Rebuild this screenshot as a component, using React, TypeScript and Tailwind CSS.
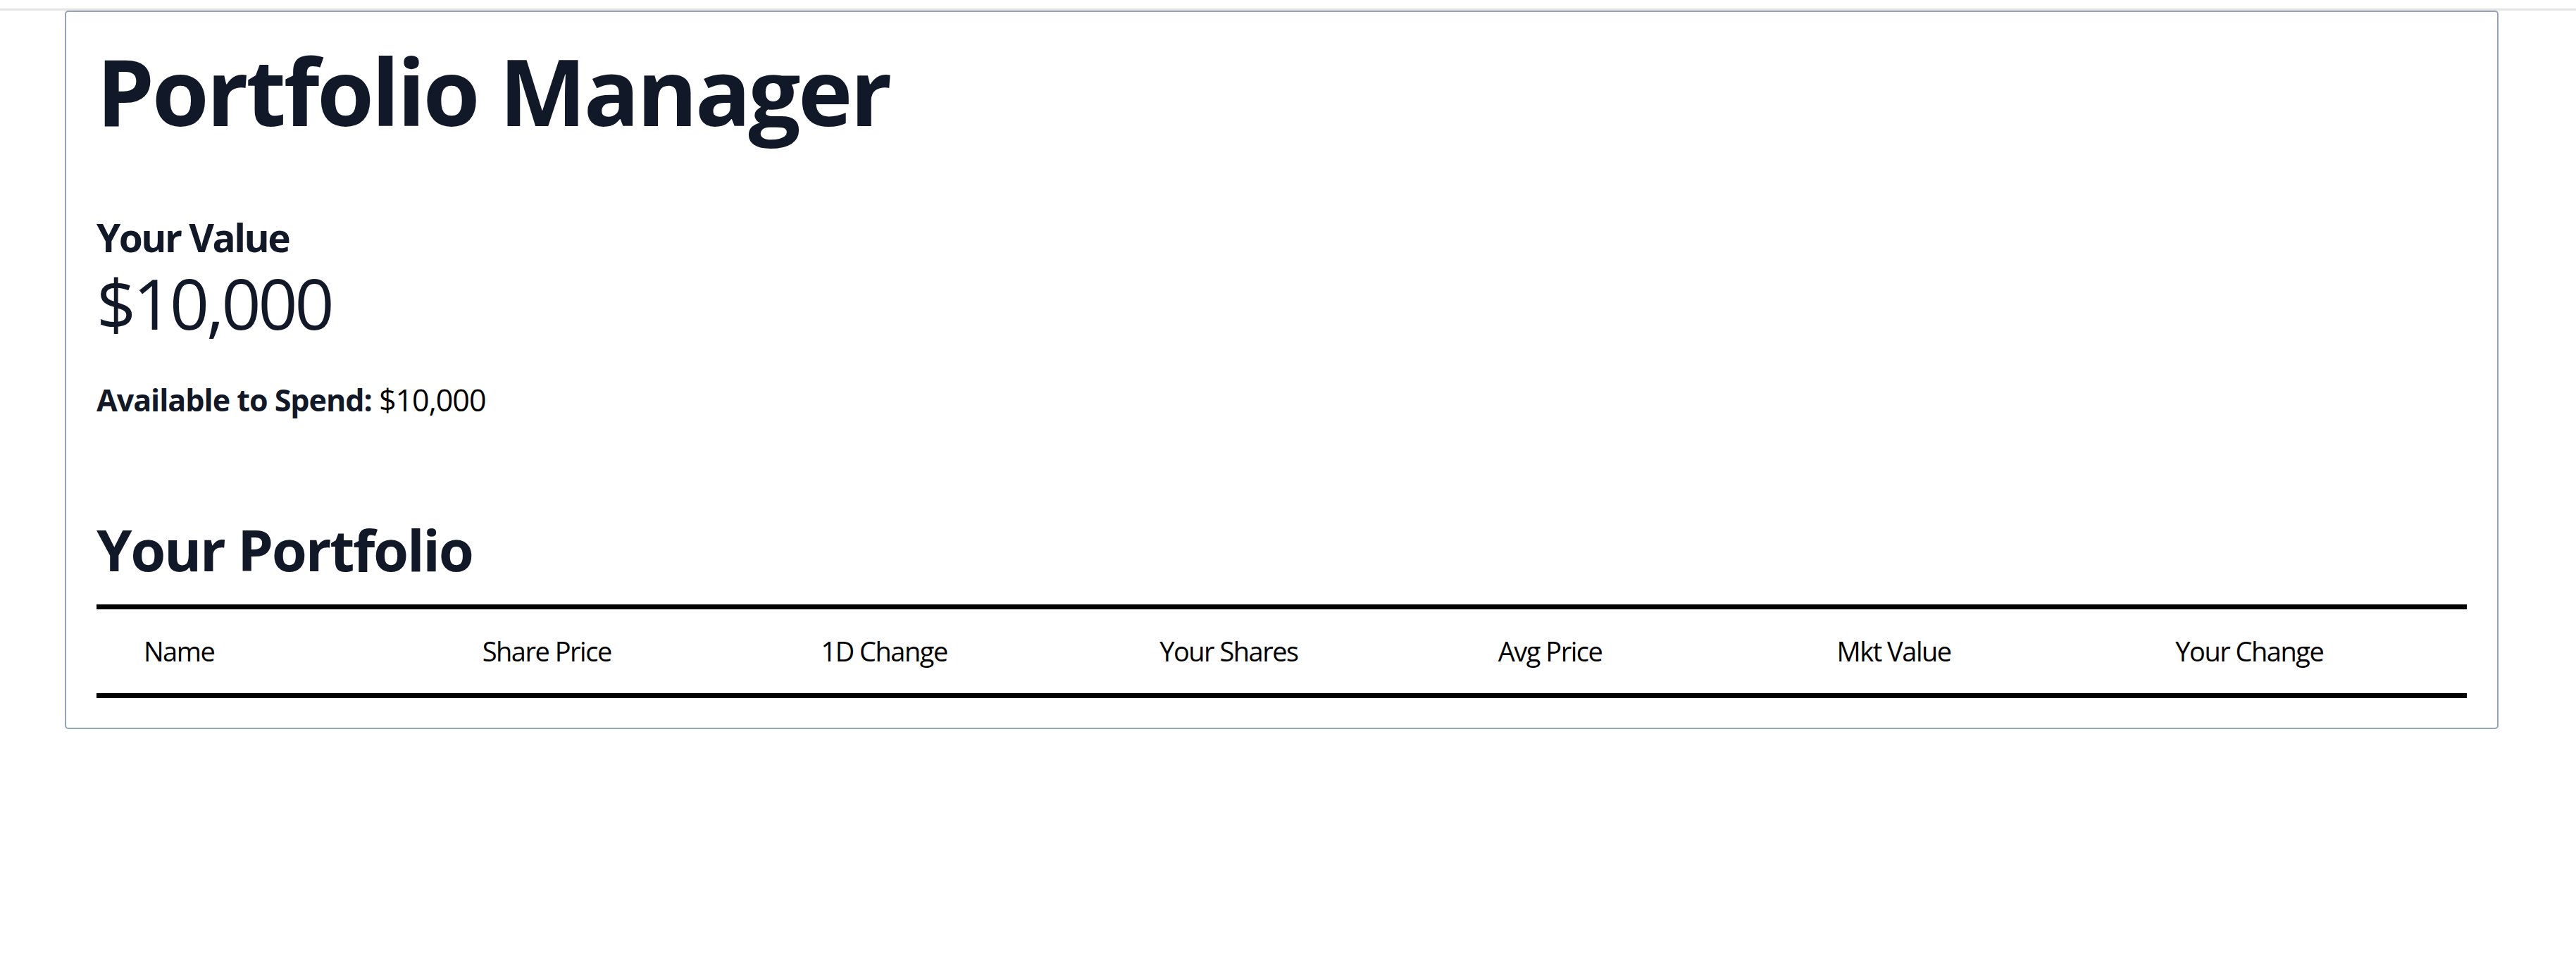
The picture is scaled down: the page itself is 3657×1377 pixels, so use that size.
import React from "react";

const columns = [
  "Name",
  "Share Price",
  "1D Change",
  "Your Shares",
  "Avg Price",
  "Mkt Value",
  "Your Change",
];

export default function App() {
  return (
    <div className="min-h-[1377px] w-full bg-white font-['Open_Sans','Noto_Sans',sans-serif]">
      <div className="pt-[12px]">
        <div className="h-[3px] w-full bg-[#e4e4e2]" />
      </div>
      <div className="ml-[92px] w-[3455px] rounded-[5px] border-[2px] border-[#94a3b8] px-[43px] pt-[33px] pb-[42px]">
        <h1 className="text-[131px] leading-[157px] font-bold text-[#111827] tracking-[-3.5px]">
          Portfolio Manager
        </h1>
        <h2 className="mt-[100px] text-[55px] leading-[60px] font-bold text-[#111827] tracking-[-2.5px]">
          Your Value
        </h2>
        <div className="mt-[8px] text-[98px] leading-[110px] font-normal text-[#111827] tracking-[-4px]">
          $10,000
        </div>
        <p className="mt-[57px] text-[43px] leading-[52px] text-black tracking-[-1px]">
          <strong className="font-bold text-[#111827]">Available to Spend:</strong> $10,000
        </p>
        <h2 className="mt-[137px] text-[81px] leading-[97px] font-bold text-[#111827] tracking-[-2.3px]">
          Your Portfolio
        </h2>
        <div className="mt-[30px] grid grid-cols-7 border-y-[7px] border-black">
          {columns.map((c) => (
            <div
              key={c}
              className="h-[119px] pl-[67px] text-left text-[38px] leading-[119px] font-normal text-black tracking-[-1.5px]"
            >
              {c}
            </div>
          ))}
        </div>
      </div>
    </div>
  );
}
